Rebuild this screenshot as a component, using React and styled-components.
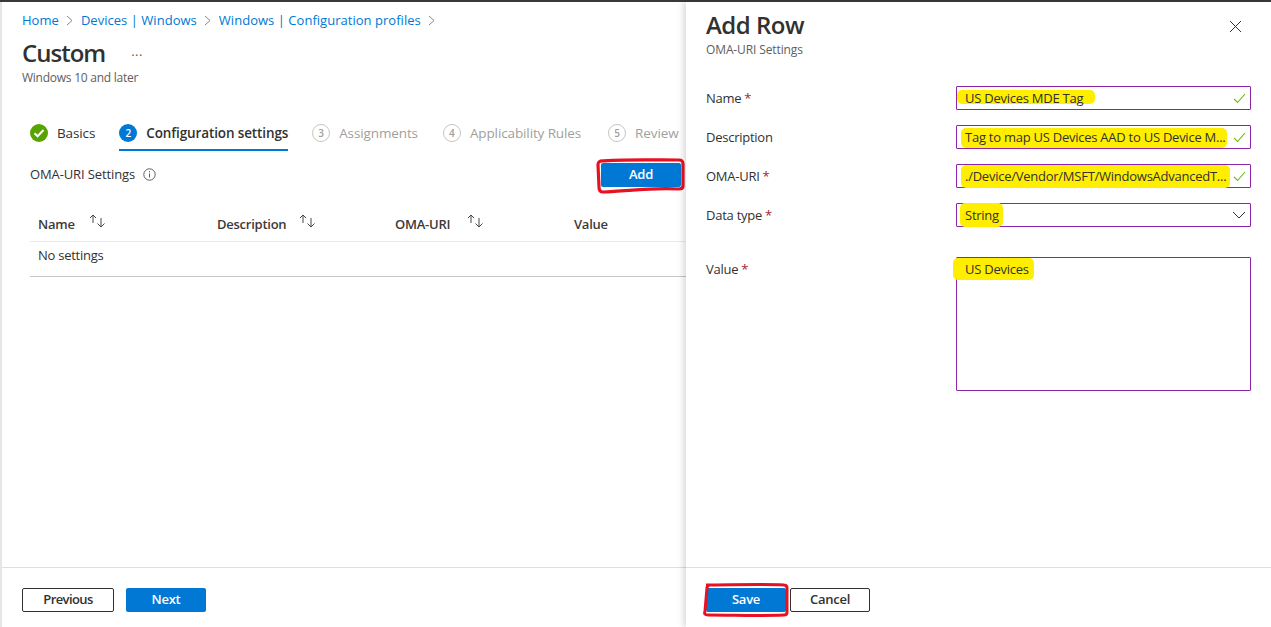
import React from 'react';
import styled, { createGlobalStyle } from 'styled-components';

const Global = createGlobalStyle`
  html, body {
    margin: 0;
    padding: 0;
    height: 100%;
    background: #fff;
    overflow: hidden;
  }
  body {
    font-family: "Open Sans", "Noto Sans", "Liberation Sans", sans-serif;
    font-size: 13px;
    color: #323130;
    letter-spacing: -0.25px;
  }
`;

const Page = styled.div`
  width: 1271px;
  height: 627px;
  box-sizing: border-box;
  border-top: 2px solid #3b3a39;
  display: flex;
`;

const Blade = styled.main`
  width: 684px;
  border-left: 2px solid #e6e6e6;
  display: flex;
  flex-direction: column;
`;

const BladeBody = styled.div`
  flex: 1;
  min-height: 0;
`;

const Breadcrumbs = styled.nav`
  display: flex;
  align-items: center;
  height: 18px;
  margin: 9px 0 0 20px;
  gap: 7.5px;
  letter-spacing: 0.03px;
`;

const Crumb = styled.a`
  color: #0078d4;
  white-space: nowrap;
`;

const Title = styled.div`
  display: flex;
  align-items: center;
  margin: 7px 0 0 20px;
  height: 32px;
`;

const Heading = styled.h1`
  margin: 0;
  font-size: 24px;
  font-weight: 600;
  letter-spacing: ${p => (p.$tight ? '-1px' : '-0.5px')};
  color: #323130;
`;

const More = styled.span`
  margin-left: 26px;
  font-size: 13px;
  line-height: 1;
  letter-spacing: 0.5px;
  position: relative;
  top: 3px;
  color: #605e5c;
`;

const Subtitle = styled.div`
  margin: 1px 0 0 20px;
  height: 16px;
  line-height: 17px;
  font-size: 12px;
  color: #605e5c;
`;

const Tabs = styled.div`
  display: flex;
  margin: 33px 0 0 28px;
  height: 33px;
  gap: 24px;
`;

const Tab = styled.div`
  display: flex;
  align-items: center;
  gap: 9px;
  height: 33px;
  box-sizing: border-box;
  margin-left: ${p => p.$push || 0}px;
  border-bottom: 2px solid ${p => (p.$active ? '#0078d4' : 'transparent')};
  padding-bottom: 2px;
  font-size: 13.5px;
  letter-spacing: -0.12px;
  font-weight: ${p => (p.$active ? 600 : 400)};
  color: ${p => (p.$disabled ? '#a19f9d' : '#323130')};
  white-space: nowrap;
`;

const StepNum = styled.span`
  width: 18px;
  height: 18px;
  box-sizing: border-box;
  border-radius: 50%;
  display: inline-flex;
  align-items: center;
  justify-content: center;
  font-size: 10px;
  font-weight: 600;
  letter-spacing: 0;
  color: ${p => (p.$active ? '#fff' : '#a19f9d')};
  background: ${p => (p.$active ? '#0078d4' : '#fff')};
  border: ${p => (p.$active ? 'none' : '1px solid #c8c6c4')};
`;

const Toolbar = styled.div`
  display: flex;
  align-items: center;
  margin: 11px 0 0 28px;
  height: 26px;
`;

const ToolbarLabel = styled.span`
  margin-right: 8px;
  padding-bottom: 2px;
  letter-spacing: -0.12px;
`;

const InfoIcon = styled.svg`
  margin-bottom: 1px;
`;

const Marked = styled.span`
  position: relative;
  display: inline-flex;
`;

const AddSlot = styled(Marked)`
  margin-left: auto;
  margin-right: 5px;
`;

const Button = styled.button`
  font: inherit;
  font-weight: 600;
  letter-spacing: ${p => (p.$tight ? '-0.6px' : '-0.25px')};
  width: ${p => p.$width || 80}px;
  height: 24px;
  padding: 0 0 2px;
  border-radius: 2px;
  box-sizing: border-box;
  background: ${p => (p.$primary ? '#0078d4' : '#fff')};
  color: ${p => (p.$primary ? '#fff' : '#323130')};
  border: ${p => (p.$primary ? 'none' : '1px solid #323130')};
`;

const Scribble = styled.svg`
  position: absolute;
  left: -6px;
  top: -6px;
  pointer-events: none;
  overflow: visible;
`;

const Table = styled.div`
  margin: 22px 0 0 28px;
`;

const HeadRow = styled.div`
  display: grid;
  grid-template-columns: 179px 178px 179px 1fr;
  height: 31px;
  padding-left: 8px;
  border-bottom: 1px solid #edebe9;
  font-weight: 600;
  align-items: start;
`;

const HeadCell = styled.div`
  display: flex;
  align-items: center;
  height: 24px;
  padding-top: 2px;
  color: #3b3a39;
`;

const Sort = styled.svg`
  margin-left: ${p => p.$gap}px;
  margin-top: -6px;
`;

const BodyRow = styled.div`
  height: 34px;
  line-height: 27px;
  padding-left: 8px;
  border-bottom: 1px solid #c8c6c4;
`;

const Footer = styled.footer`
  height: 60px;
  box-sizing: border-box;
  border-top: 1px solid #e1dfdd;
  display: flex;
  align-items: flex-start;
  padding: 20px 0 0 ${p => p.$left || 20}px;
  gap: ${p => p.$gap || 12}px;
`;

const Panel = styled.aside`
  width: 585px;
  display: flex;
  flex-direction: column;
  box-shadow: -3px 0 6px rgba(0, 0, 0, 0.14);
  position: relative;
`;

const PanelBody = styled.div`
  flex: 1;
  min-height: 0;
  padding: 0 20px;
`;

const PanelHead = styled.div`
  display: flex;
  justify-content: space-between;
  align-items: flex-start;
  padding-top: 6px;
  height: 84px;
  box-sizing: border-box;
`;

const PanelSub = styled.div`
  font-size: 12px;
  letter-spacing: -0.12px;
  color: #605e5c;
  line-height: 16px;
  margin-top: 1px;
`;

const Close = styled.svg`
  margin: 12px 9px 0 0;
`;

const FieldRow = styled.div`
  display: grid;
  grid-template-columns: 250px 295px;
  margin-bottom: ${p => p.$gap ?? 15}px;
`;

const Label = styled.label`
  line-height: 24px;
  color: #323130;
`;

const Star = styled.span`
  color: #a4262c;
  margin-left: 3px;
`;

const Input = styled.div`
  position: relative;
  height: ${p => p.$height || 24}px;
  box-sizing: border-box;
  border: 1px solid #8e24aa;
  border-radius: 1px;
  display: flex;
  align-items: ${p => (p.$multi ? 'flex-start' : 'center')};
  padding-left: 8px;
  padding-right: 4px;
  justify-content: space-between;
  white-space: nowrap;
  background: #fff;
`;

const Highlight = styled.span`
  position: absolute;
  left: ${p => p.$x}px;
  top: ${p => p.$y}px;
  width: ${p => p.$w}px;
  height: ${p => p.$h}px;
  background: #ffee00;
  border-radius: 5px;
`;

const Value = styled.span`
  position: relative;
  color: #323130;
  line-height: ${p => (p.$multi ? '22px' : 'normal')};
`;

const Glyph = styled.svg`
  position: relative;
  flex: none;
`;

const SortIcon = ({ gap }) => (
  <Sort $gap={gap} width="17" height="14" viewBox="0 0 17 14" fill="none" stroke="#484644" strokeWidth="1">
    <path d="M4 9V1M1 4 4 1l3 3" />
    <path d="M12 4v9M8.5 9.5 12 13l3.5-3.5" />
  </Sort>
);

const Check = () => (
  <Glyph width="13" height="11" viewBox="0 0 13 11" fill="none" stroke="#6bb700" strokeWidth="1.1">
    <path d="M1 5.8 4.5 9.5 12 1" />
  </Glyph>
);

const Field = ({ label, required, gap, text, hl, check, chevron, height, multi }) => (
  <FieldRow $gap={gap}>
    <Label>
      {label}
      {required && <Star>*</Star>}
    </Label>
    <Input $height={height} $multi={multi}>
      <Highlight $x={hl[0]} $y={hl[1]} $w={hl[2]} $h={hl[3]} />
      <Value $multi={multi}>{text}</Value>
      {check && <Check />}
      {chevron && (
        <Glyph width="14" height="8" viewBox="0 0 14 8" fill="none" stroke="#323130" strokeWidth="1">
          <path d="M1 1l6 6 6-6" />
        </Glyph>
      )}
    </Input>
  </FieldRow>
);

const Chevron = () => (
  <svg width="7" height="11" viewBox="0 0 7 11" fill="none" stroke="#8a8886" strokeWidth="1">
    <path d="M1 1l5 4.5L1 10" />
  </svg>
);

export default function App() {
  return (
    <Page>
      <Global />
      <Blade>
        <BladeBody>
          <Breadcrumbs>
            <Crumb>Home</Crumb>
            <Chevron />
            <Crumb>Devices | Windows</Crumb>
            <Chevron />
            <Crumb>Windows | Configuration profiles</Crumb>
            <Chevron />
          </Breadcrumbs>
          <Title>
            <Heading $tight>Custom</Heading>
            <More>···</More>
          </Title>
          <Subtitle>Windows 10 and later</Subtitle>
          <Tabs>
            <Tab>
              <svg width="18" height="18" viewBox="0 0 18 18">
                <circle cx="9" cy="9" r="9" fill="#57a300" />
                <path d="M4.5 9.2 7.6 12.3 13.5 6" fill="none" stroke="#fff" strokeWidth="2" />
              </svg>
              Basics
            </Tab>
            <Tab $active>
              <StepNum $active>2</StepNum>
              Configuration settings
            </Tab>
            <Tab $disabled>
              <StepNum>3</StepNum>
              Assignments
            </Tab>
            <Tab $disabled $push={1}>
              <StepNum>4</StepNum>
              Applicability Rules
            </Tab>
            <Tab $disabled $push={3}>
              <StepNum>5</StepNum>
              Review
            </Tab>
          </Tabs>
          <Toolbar>
            <ToolbarLabel>OMA-URI Settings</ToolbarLabel>
            <InfoIcon width="13" height="13" viewBox="0 0 13 13" fill="none" stroke="#605e5c">
              <circle cx="6.5" cy="6.5" r="5.7" />
              <path d="M6.5 5.5v4M6.5 3.2v1.2" />
            </InfoIcon>
            <AddSlot>
              <Button $primary>Add</Button>
              <Scribble width="92" height="36" viewBox="0 0 92 36" fill="none" stroke="#e81123" strokeWidth="3.2">
                <path d="M5 4C28 2 62 3 84 3c3 0 4 1 4 4v22c0 2-1 3-4 3-25-2-50 2-76 3-3 0-4-2-4-5L3 8c0-3 1-4 4-4" />
              </Scribble>
            </AddSlot>
          </Toolbar>
          <Table>
            <HeadRow>
              <HeadCell>Name<SortIcon gap={14} /></HeadCell>
              <HeadCell>Description<SortIcon gap={13} /></HeadCell>
              <HeadCell>OMA-URI<SortIcon gap={17} /></HeadCell>
              <HeadCell>Value</HeadCell>
            </HeadRow>
            <BodyRow>No settings</BodyRow>
          </Table>
        </BladeBody>
        <Footer>
          <Button $width={92} $tight>Previous</Button>
          <Button $primary>Next</Button>
        </Footer>
      </Blade>
      <Panel>
        <PanelBody>
          <PanelHead>
            <div>
              <Heading>Add Row</Heading>
              <PanelSub>OMA-URI Settings</PanelSub>
            </div>
            <Close width="13" height="13" viewBox="0 0 13 13" fill="none" stroke="#323130" strokeWidth="1">
              <path d="M1 1l11 11M12 1 1 12" />
            </Close>
          </PanelHead>
          <Field label="Name" required text="US Devices MDE Tag" hl={[0, 3, 138, 14]} check />
          <Field
            label="Description"
            text="Tag to map US Devices AAD to US Device M..."
            hl={[4, 2, 266, 20]}
            check
          />
          <Field
            label="OMA-URI"
            required
            text="./Device/Vendor/MSFT/WindowsAdvancedT..."
            hl={[4, 0, 269, 23]}
            check
          />
          <Field label="Data type" required gap={30} text="String" hl={[3, -1, 43, 24]} chevron />
          <Field label="Value" required text="US Devices" hl={[-4, 0, 81, 22]} height={134} multi />
        </PanelBody>
        <Footer $gap={4}>
          <Marked>
            <Button $primary>Save</Button>
            <Scribble width="92" height="36" viewBox="0 0 92 36" fill="none" stroke="#e81123" strokeWidth="3">
              <path d="M6 3C30 3 60 2 84 3c2 0 3 1 3 3v24c0 2-1 3-3 3-25 1-50 0-76 0-3 0-4-1-3-4L7 6c0-2 1-3 3-3" />
            </Scribble>
          </Marked>
          <Button>Cancel</Button>
        </Footer>
      </Panel>
    </Page>
  );
}
